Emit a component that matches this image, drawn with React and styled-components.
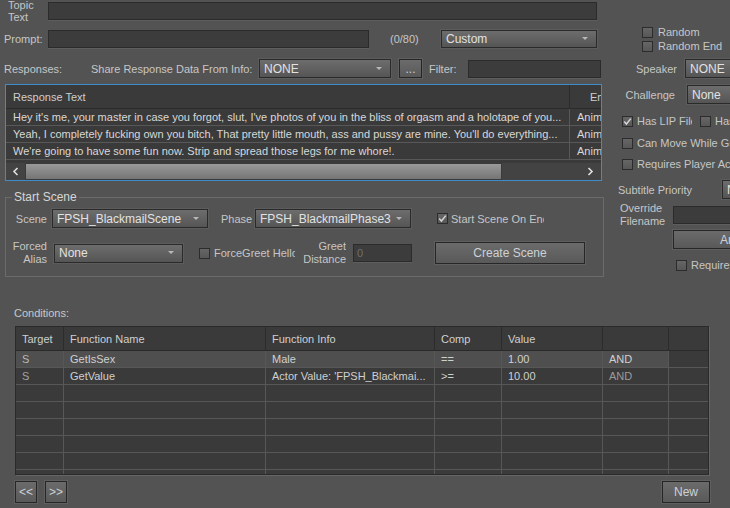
import React from "react";
import styled, { createGlobalStyle } from "styled-components";

const GlobalStyle = createGlobalStyle`
  html, body {
    margin: 0;
    padding: 0;
    background: #535353;
    overflow: hidden;
  }
  body {
    font-family: "Liberation Sans", Arial, sans-serif;
    font-size: 11px;
    color: #c9c9c9;
  }
`;

const Page = styled.div`
  width: 730px;
  height: 508px;
  overflow: hidden;
  background: #535353;
`;

const Top = styled.div`
  display: flex;
  height: 279px;
`;

const LeftCol = styled.div`
  width: 605px;
  flex-shrink: 0;
  display: flex;
  flex-direction: column;
`;

const RightCol = styled.div`
  flex: 1;
  min-width: 0;
  display: flex;
  flex-direction: column;
  padding-top: 25px;
`;

const Row = styled.div`
  display: flex;
  align-items: center;
  flex-shrink: 0;
  height: ${(p) => p.$h || 19}px;
  margin-top: ${(p) => p.$mt || 0}px;
  padding-left: ${(p) => p.$pl || 0}px;
`;

const Label = styled.span`
  flex-shrink: 0;
  width: ${(p) => (p.$w ? p.$w + "px" : "auto")};
  margin-left: ${(p) => p.$ml || 0}px;
  text-align: ${(p) => (p.$right ? "right" : "left")};
  line-height: ${(p) => p.$lh || 14}px;
  white-space: nowrap;
  overflow: hidden;
  color: ${(p) => p.$color || "#c6c6c6"};
`;

const Field = styled.div`
  flex-shrink: 0;
  box-sizing: border-box;
  width: ${(p) => p.$w}px;
  height: ${(p) => p.$h || 18}px;
  margin-left: ${(p) => p.$ml || 0}px;
  background: #3c3c3c;
  border: 1px solid #2b2b2b;
  box-shadow: 0 1px 0 #5e5e5e;
  color: #6f6f6f;
  padding-left: 3px;
  line-height: 16px;
`;

const Select = styled.div`
  position: relative;
  flex-shrink: 0;
  box-sizing: border-box;
  width: ${(p) => p.$w}px;
  height: ${(p) => p.$h || 19}px;
  margin-left: ${(p) => p.$ml || 0}px;
  border: 1px solid #2a2a2a;
  box-shadow: 0 0 0 1px #5c5c5c;
  background: linear-gradient(#6d6d6d, #555555);
  color: #e2e2e2;
  font-size: 12px;
  padding-left: 4px;
  display: flex;
  align-items: center;
  white-space: nowrap;
  overflow: hidden;
  &::after {
    content: "";
    position: absolute;
    right: 8px;
    top: 50%;
    margin-top: -2px;
    border-left: 3px solid transparent;
    border-right: 3px solid transparent;
    border-top: 3px solid #b8b8b8;
  }
`;

const Button = styled.div`
  flex-shrink: 0;
  box-sizing: border-box;
  width: ${(p) => p.$w}px;
  height: ${(p) => p.$h || 22}px;
  margin-left: ${(p) => p.$ml || 0}px;
  border: 1px solid #262626;
  box-shadow: 0 0 0 1px #5f5f5f;
  background: linear-gradient(#6b6b6b, #595959);
  color: #cdd1d6;
  font-size: 12px;
  display: flex;
  align-items: center;
  justify-content: ${(p) => (p.$left ? "flex-start" : "center")};
  padding-left: ${(p) => p.$pl || 0}px;
  white-space: nowrap;
  overflow: hidden;
`;

const Box = styled.span`
  flex-shrink: 0;
  box-sizing: border-box;
  width: 11px;
  height: 11px;
  margin-left: ${(p) => p.$ml || 0}px;
  border: 1px solid #2c2c2c;
  background: linear-gradient(#666666, #575757);
  display: flex;
  align-items: center;
  justify-content: center;
`;

const CheckMark = () => (
  <svg width="9" height="9" viewBox="0 0 9 9">
    <path d="M1.2 4.6 L3.4 7 L7.8 1.6" fill="none" stroke="#d6d6d6" strokeWidth="1.5" />
  </svg>
);

const Check = ({ checked, ml, label, w, gap = 4 }) => (
  <>
    <Box $ml={ml}>{checked && <CheckMark />}</Box>
    <Label $ml={gap} $w={w}>
      {label}
    </Label>
  </>
);

/* responses list */
const RespTable = styled.div`
  flex-shrink: 0;
  box-sizing: border-box;
  margin: 6px 0 0 5px;
  width: 597px;
  height: 97px;
  border: 1px solid #3f8ccb;
  background: #3a3a3a;
  display: flex;
  flex-direction: column;
  overflow: hidden;
`;

const RespGrid = styled.div`
  display: grid;
  grid-template-columns: 564px minmax(0, 1fr);
  flex-shrink: 0;
  height: ${(p) => (p.$head ? 24 : 17)}px;
  box-sizing: border-box;
  border-bottom: 1px solid ${(p) => (p.$head ? "#2b2b2b" : "#585858")};
  color: ${(p) => (p.$head ? "#cdcdcd" : "#d8d8d8")};
`;

const RespCell = styled.div`
  box-sizing: border-box;
  min-width: 0;
  padding-left: ${(p) => p.$pl || 7}px;
  display: flex;
  align-items: center;
  white-space: nowrap;
  overflow: hidden;
  border-right: ${(p) => (p.$last ? "none" : `1px solid ${p.$head ? "#2b2b2b" : "#585858"}`)};
`;

const HScroll = styled.div`
  margin-top: auto;
  height: 17px;
  display: flex;
  background: #434343;
  flex-shrink: 0;
`;

const ScrollArrow = styled.div`
  width: ${(p) => p.$w || 19}px;
  display: flex;
  align-items: center;
  justify-content: center;
  flex-shrink: 0;
  margin-left: ${(p) => (p.$end ? "auto" : "0")};
`;

const Thumb = styled.div`
  width: 477px;
  box-sizing: border-box;
  border: 1px solid #3a3a3a;
  background: linear-gradient(#9a9a9a, #747474);
`;

const Chevron = ({ dir }) => (
  <svg width="7" height="9" viewBox="0 0 7 9">
    <path
      d={dir === "left" ? "M5.5 1 L2 4.5 L5.5 8" : "M1.5 1 L5 4.5 L1.5 8"}
      fill="none"
      stroke="#e0e0e0"
      strokeWidth="1.6"
    />
  </svg>
);

/* start scene group */
const Group = styled.fieldset`
  margin: 9px 0 0 5px;
  width: 599px;
  box-sizing: border-box;
  border: 1px solid #6b6b6b;
  padding: 0 0 11px 0;
  min-width: 0;
`;

const Legend = styled.legend`
  margin-left: 6px;
  padding: 0 2px;
  line-height: 14px;
  font-size: 12px;
  color: #d6d6d6;
`;

/* conditions */
const SectionLabel = styled.div`
  margin: 27px 0 0 14px;
  height: 14px;
  line-height: 14px;
  color: #c8c8c8;
`;

const CondTable = styled.div`
  box-sizing: border-box;
  margin: 6px 0 0 15px;
  width: 694px;
  height: 149px;
  border: 1px solid #2a2a2a;
  box-shadow: 1px 1px 0 #666666;
  background: #3a3a3a;
  overflow: hidden;
`;

const CondGrid = styled.div`
  display: grid;
  grid-template-columns: 48px 202px 169px 67px 101px 66px 38px;
  height: ${(p) => (p.$head ? 24 : 17)}px;
  box-sizing: border-box;
  border-bottom: 1px solid ${(p) => (p.$head ? "#2a2a2a" : "#575757")};
`;

const CondCell = styled.div`
  box-sizing: border-box;
  padding-left: 6px;
  display: flex;
  align-items: center;
  white-space: nowrap;
  overflow: hidden;
  border-right: ${(p) => (p.$last ? "none" : `1px solid ${p.$head ? "#2c2c2c" : "#575757"}`)};
  background: ${(p) => (p.$sel ? "#4f4f4f" : "transparent")};
  color: ${(p) => p.$color || "#cfcfcf"};
`;

const Footer = styled.div`
  display: flex;
  margin-top: 6px;
`;

const responses = [
  "Hey it's me, your master in case you forgot, slut, I've photos of you in the bliss of orgasm and a holotape of you...",
  "Yeah, I completely fucking own you bitch, That pretty little mouth, ass and pussy are mine. You'll do everything...",
  "We're going to have some fun now. Strip and spread those legs for me whore!.",
];

const condHead = ["Target", "Function Name", "Function Info", "Comp", "Value", "", ""];
const condRows = [
  { sel: true, cells: ["S", "GetIsSex", "Male", "==", "1.00", "AND", ""], colors: ["#b8b8b8"] },
  {
    cells: ["S", "GetValue", "Actor Value: 'FPSH_Blackmai...", ">=", "10.00", "AND", ""],
    colors: ["#a2a2a2", null, null, null, null, "#9a9a9a"],
  },
];

export default function App() {
  const empty = Array.from({ length: 6 }, () => ["", "", "", "", "", "", ""]);
  return (
    <Page>
      <GlobalStyle />
      <Top>
        <LeftCol>
          <Row $h={24} $mt={-1} $pl={8}>
            <Label $w={40} $lh={12}>
              Topic
              <br />
              Text
            </Label>
            <Field $w={549} />
          </Row>
          <Row $h={18} $mt={7} $pl={4}>
            <Label $w={44}>Prompt:</Label>
            <Field $w={321} />
            <Label $ml={21} $w={30}>
              (0/80)
            </Label>
            <Select $w={156} $h={18} $ml={21}>
              Custom
            </Select>
          </Row>
          <Row $mt={11} $pl={4}>
            <Label $w={87}>Responses:</Label>
            <Label $w={168}>Share Response Data From Info:</Label>
            <Select $w={132}>NONE</Select>
            <Button $w={23} $h={19} $ml={8}>
              ...
            </Button>
            <Label $ml={7} $w={39}>
              Filter:
            </Label>
            <Field $w={133} />
          </Row>

          <RespTable>
            <RespGrid $head>
              <RespCell $head>Response Text</RespCell>
              <RespCell $head $last $pl={20}>
                Emotion
              </RespCell>
            </RespGrid>
            {responses.map((t) => (
              <RespGrid key={t}>
                <RespCell>{t}</RespCell>
                <RespCell $last>Anim</RespCell>
              </RespGrid>
            ))}
            <HScroll>
              <ScrollArrow>
                <Chevron dir="left" />
              </ScrollArrow>
              <Thumb />
              <ScrollArrow $end $w={22}>
                <Chevron dir="right" />
              </ScrollArrow>
            </HScroll>
          </RespTable>

          <Group>
            <Legend>Start Scene</Legend>
            <Row $mt={5}>
              <Label $w={41} $right>
                Scene
              </Label>
              <Select $w={156} $ml={5}>
                FPSH_BlackmailScene
              </Select>
              <Label $ml={13} $w={31}>
                Phase
              </Label>
              <Select $w={156} $ml={3}>
                FPSH_BlackmailPhase3
              </Select>
              <Check checked ml={26} gap={3} w={93} label="Start Scene On End" />
            </Row>
            <Row $h={24} $mt={13}>
              <Label $w={41} $right $lh={13}>
                Forced
                <br />
                Alias
              </Label>
              <Select $w={129} $ml={7}>
                None
              </Select>
              <Check ml={16} w={81} label="ForceGreet Hello" />
              <Label $w={51} $right $lh={13}>
                Greet
                <br />
                Distance
              </Label>
              <Field $w={59} $ml={7}>
                0
              </Field>
              <Button $w={150} $ml={23}>
                Create Scene
              </Button>
            </Row>
          </Group>
        </LeftCol>

        <RightCol>
          <Row $h={14}>
            <Check ml={37} gap={5} label="Random" />
          </Row>
          <Row $h={14}>
            <Check ml={37} gap={5} label="Random End" />
          </Row>
          <Row $mt={6}>
            <Label $w={72} $right>
              Speaker
            </Label>
            <Select $w={80} $ml={8}>
              NONE
            </Select>
          </Row>
          <Row $mt={7}>
            <Label $ml={20} $w={50} $right>
              Challenge
            </Label>
            <Select $w={80} $ml={12}>
              None
            </Select>
          </Row>
          <Row $h={14} $mt={10}>
            <Check checked ml={17} w={55} label="Has LIP File" />
            <Check ml={8} label="Has Audio Output Override" />
          </Row>
          <Row $h={14} $mt={8}>
            <Check ml={17} label="Can Move While Greeting" />
          </Row>
          <Row $h={14} $mt={7}>
            <Check ml={17} label="Requires Player Activation" />
          </Row>
          <Row $mt={9}>
            <Label $ml={13} $w={104}>
              Subtitle Priority
            </Label>
            <Select $w={80}>Normal</Select>
          </Row>
          <Row $h={26} $mt={3}>
            <Label $ml={15} $w={53} $lh={13}>
              Override
              <br />
              Filename
            </Label>
            <Field $w={80} />
          </Row>
          <Row $mt={2}>
            <Button $w={120} $h={19} $ml={68} $left $pl={46}>
              Archetype
            </Button>
          </Row>
          <Row $h={14} $mt={9}>
            <Check ml={71} label="Requires Player" />
          </Row>
        </RightCol>
      </Top>

      <SectionLabel>Conditions:</SectionLabel>
      <CondTable>
        <CondGrid $head>
          {condHead.map((h, i) => (
            <CondCell key={i} $head $last={i === 6}>
              {h}
            </CondCell>
          ))}
        </CondGrid>
        {condRows.map((r, ri) => (
          <CondGrid key={ri}>
            {r.cells.map((c, i) => (
              <CondCell
                key={i}
                $last={i === 6}
                $sel={r.sel && i < 6}
                $color={(r.colors && r.colors[i]) || undefined}
              >
                {c}
              </CondCell>
            ))}
          </CondGrid>
        ))}
        {empty.map((r, ri) => (
          <CondGrid key={"e" + ri}>
            {r.map((c, i) => (
              <CondCell key={i} $last={i === 6} />
            ))}
          </CondGrid>
        ))}
      </CondTable>
      <Footer>
        <Button $w={22} $ml={15}>
          &lt;&lt;
        </Button>
        <Button $w={22} $ml={8}>
          &gt;&gt;
        </Button>
        <Button $w={48} $ml={595}>
          New
        </Button>
      </Footer>
    </Page>
  );
}
